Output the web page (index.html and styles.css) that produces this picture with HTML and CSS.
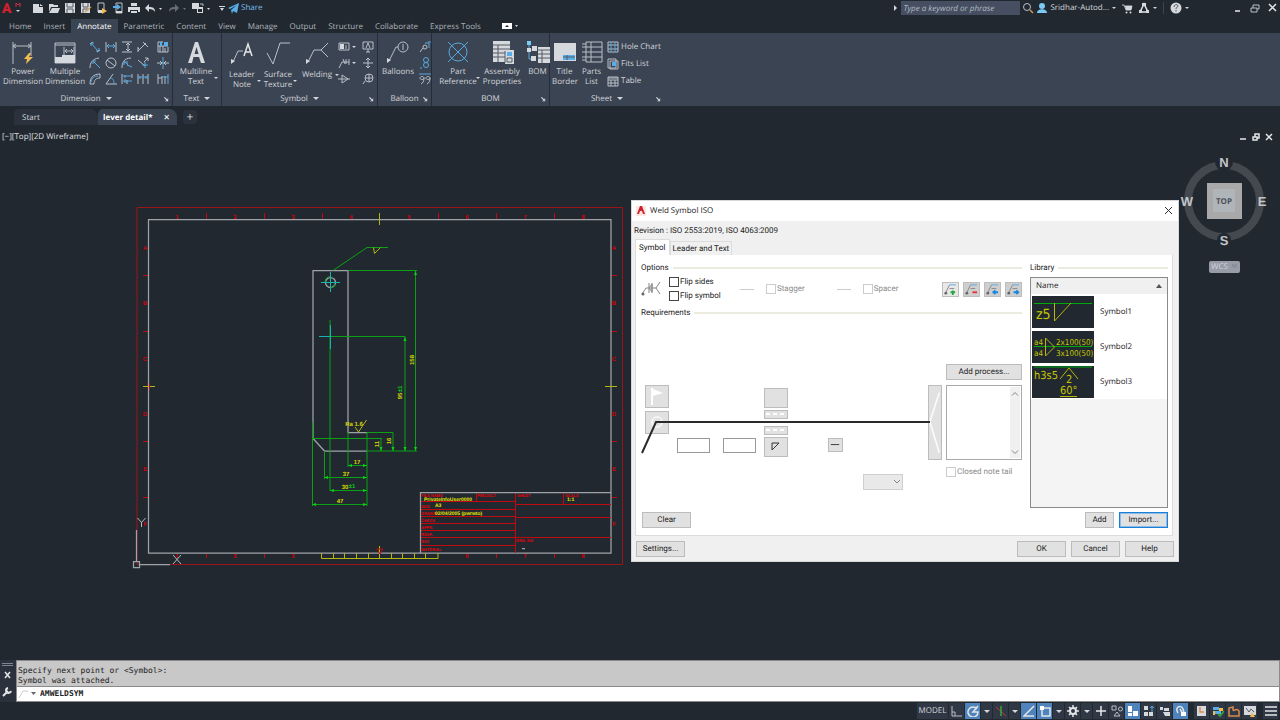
FILE: index.html
```
<!DOCTYPE html>
<html lang="en">
<head>
	<meta charset="utf-8">
	<title>lever detail</title>
	<link rel="stylesheet" href="styles.css">
</head>
<body>

	<!-- title bar -->
	<header class="titlebar">
		<svg class="logo" width="24" height="16" viewBox="0 0 24 16"><path class="red" d="M2 13L6 3h2l4 10H9L7 6 5 13zM4.500 9h5v2h-5z"/><path class="line-red" d="M16 7V3l2 2 2-2v4"/><path class="solid" d="M16 10h4l-2 2z"/></svg>
		<div class="quick">
			<button aria-label="New"><svg width="12" height="12" viewBox="0 0 12 12"><path class="solid" d="M1 2h6v3h4v6H1zM8 2l3 2H8z"/></svg></button>
			<button aria-label="Open"><svg width="12" height="12" viewBox="0 0 12 12"><path class="solid" d="M1 2h4l1 1h4v2H3l-2 5zM4 6h8l-2 5H1z"/></svg></button>
			<button aria-label="Save"><svg width="12" height="12" viewBox="0 0 12 12"><path class="solid" d="M1 1h10v10H1z"/><path class="line-hole" d="M3 1v4h6V1M3 11V7h6v4"/></svg></button>
			<button aria-label="Save As"><svg width="12" height="12" viewBox="0 0 12 12"><path class="solid" d="M1 1h9v10H1z"/><path class="line-hole" d="M3 1v4h5V1M3 11V7h5"/><path class="line-gold" d="M5 10l6-5"/></svg></button>
			<button aria-label="Open from mobile"><svg width="12" height="12" viewBox="0 0 12 12"><path class="line" d="M2 1h6v9H2z"/><path class="solid" d="M2 8h6v3H2z"/><path class="gold" d="M6 6l5 3-5 3z"/></svg></button>
			<button aria-label="Save to mobile"><svg width="12" height="12" viewBox="0 0 12 12"><path class="line" d="M4 1h6v10H4z"/><path class="solid" d="M4 9h6v2H4z"/><path class="blue" d="M1 4h4V2l4 3-4 3V6H1z"/></svg></button>
			<button aria-label="Plot"><svg width="12" height="12" viewBox="0 0 12 12"><path class="solid" d="M3 1h6v3H3zM0 5h12v5h-2V8H2v2H0zM3 9h6v2H3z"/></svg></button>
			<button class="wide" aria-label="Undo"><svg width="18" height="12" viewBox="0 0 18 12"><path class="solid" d="M1 6l4-4v3c4 0 6 1 6 5-1-2-3-3-6-3v3z"/><path class="solid" d="M15 6h3l-1.500 2z"/></svg></button>
			<button class="wide dim" aria-label="Redo"><svg width="18" height="12" viewBox="0 0 18 12"><path class="solid" d="M11 6L7 2v3C3 5 1 6 1 10c1-2 3-3 6-3v3z"/><path class="solid" d="M15 6h3l-1.500 2z"/></svg></button>
			<button class="wide" aria-label="Workspace"><svg width="18" height="12" viewBox="0 0 18 12"><path class="solid" d="M0 1h7v6H0zM5 5h6v6H5z"/><path class="hole" d="M6 7h4v3H6z"/><path class="line" d="M8 2h3v2"/><path class="solid" d="M15 6h3l-1.500 2z"/></svg></button>
			<button aria-label="Customize"><svg width="12" height="12" viewBox="0 0 12 12"><path class="solid" d="M3 4h6v1H3zM4 6h4L6 9z"/></svg></button>
		</div>
		<a class="share" href="#"><svg width="11" height="11" viewBox="0 0 11 11"><path class="blue" d="M0 5l11-5-2 10-4-2-1 3-1-4 6-5-7 4z"/></svg>Share</a>
		<div class="account">
			<svg width="4" height="8" viewBox="0 0 4 8"><path class="solid" d="M0 1l3 3-3 3z"/></svg>
			<input class="search" type="text" aria-label="Search" placeholder="Type a keyword or phrase">
			<button aria-label="Search"><svg width="12" height="12" viewBox="0 0 12 12"><circle class="line" cx="5" cy="5" r="3.500"/><path class="line-gold" d="M8 8l3 3"/></svg></button>
			<button class="user"><svg width="12" height="12" viewBox="0 0 12 12"><circle class="sky" cx="6" cy="4" r="3"/><path class="sky" d="M1 11c0-5 10-5 10 0z"/></svg>Sridhar-Autod...<i class="arrow"></i></button>
			<button aria-label="App store"><svg width="11" height="11" viewBox="0 0 11 11"><path class="line" d="M0 2h2l2 5h5l1-4H3"/><path class="solid" d="M3 3h7l-1 4H4z"/><circle class="solid" cx="4.500" cy="9.500" r="1"/><circle class="solid" cx="8.500" cy="9.500" r="1"/></svg></button>
			<button class="apps" aria-label="Autodesk apps"><svg width="12" height="12" viewBox="0 0 12 12"><path class="line-bold" d="M6 2L2 10h8z"/><path class="solid" d="M4 1h4v3H4zM1 8h3v3H1zM8 8h3v3H8z"/></svg><i class="arrow"></i></button>
			<button class="help" aria-label="Help"><svg width="12" height="12" viewBox="0 0 12 12"><circle class="solid" cx="6" cy="6" r="5.500"/><path class="line-hole" d="M4 5c0-3 4-3 4-1 0 1-2 1-2 3M6 8v1.500"/></svg><i class="arrow"></i></button>
			<button class="win first" aria-label="Minimize"><svg width="10" height="10" viewBox="0 0 10 10"><path class="line-bold" d="M2 8h5"/></svg></button>
			<button class="win" aria-label="Restore"><svg width="10" height="10" viewBox="0 0 10 10"><path class="line" d="M1 5h6v4H1zM3 5V2h6v4H7"/></svg></button>
			<button class="win" aria-label="Close"><svg width="10" height="10" viewBox="0 0 10 10"><path class="line-bold" d="M2 1l7 7M9 1L2 8"/></svg></button>
		</div>
	</header>

	<!-- ribbon tabs -->
	<nav class="tabs">
		<a href="#">Home</a>
		<a href="#">Insert</a>
		<a href="#" class="active">Annotate</a>
		<a href="#">Parametric</a>
		<a href="#">Content</a>
		<a href="#">View</a>
		<a href="#">Manage</a>
		<a href="#">Output</a>
		<a href="#">Structure</a>
		<a href="#">Collaborate</a>
		<a href="#">Express Tools</a>
		<button class="toggle" aria-label="Minimize ribbon"><svg width="18" height="8" viewBox="0 0 18 8"><path class="white" d="M1 1h10v6H1z"/><path class="hole" d="M4 5h4L6 3z"/><path class="solid" d="M14 3h3l-1.500 2z"/></svg></button>
	</nav>

	<!-- ribbon -->
	<section class="ribbon">
		<div class="panel p-dimension">
			<div class="tools">
				<button class="tool w42"><svg width="24" height="24" viewBox="0 0 24 24"><path class="line" d="M2 1v22M20 1v14M2 5h18M5 3L2 5l3 2M17 3l3 2-3 2"/><path class="gold" d="M18 12l-5 6h3l-1 5 7-7h-4l2-4z"/></svg>Power<br>Dimension</button>
				<button class="tool w42"><svg width="24" height="24" viewBox="0 0 24 24"><path class="line" d="M2 2h20v20H2zM2 4h20M11 6v8M21 6v8M12 10h8M14 8l-2 2 2 2M18 8l2 2-2 2"/><path class="light" d="M2 16h7v-2h13v8H2z"/></svg>Multiple<br>Dimension</button>
				<div class="grid five">
					<button aria-label="Aligned"><svg viewBox="0 0 12 12"><path class="line" d="M1 3l3-2M8 11l3-2"/><path class="line-blue" d="M2 2l7 8M2 5V2h3M10 7v3H7"/></svg></button>
					<button aria-label="Horizontal"><svg viewBox="0 0 12 12"><path class="line" d="M1 1v10M11 1v10"/><path class="line-blue" d="M2 5h8M4 3L2 5l2 2M8 3l2 2-2 2"/></svg></button>
					<button aria-label="Vertical"><svg viewBox="0 0 12 12"><path class="line" d="M1 1h10M1 11h10M7 2v8M5 4l2-2 2 2M5 8l2 2 2-2"/></svg></button>
					<button aria-label="Angular"><svg viewBox="0 0 12 12"><path class="line" d="M1 10l8-8M1 6v5M6 1l5 5M3 9l-2-2"/></svg></button>
					<button aria-label="Arrange"><svg viewBox="0 0 12 12"><path class="line" d="M1 1h5M1 1v10h10V6M3 5v6M6 5v6M1 5h10M8 7v4"/><path class="blue" d="M7 1h4v4H7zM3 1h2v4H3z"/></svg></button>
					<button aria-label="Radius"><svg viewBox="0 0 12 12"><path class="line" d="M10 1C3 2 1 6 1 11"/><path class="line-blue" d="M4 4l7 7M4 7V4h3"/></svg></button>
					<button aria-label="Diameter"><svg viewBox="0 0 12 12"><circle class="line" cx="6" cy="6" r="5"/><path class="line" d="M2 3l8 6"/></svg></button>
					<button aria-label="Jogged"><svg viewBox="0 0 12 12"><path class="line" d="M10 1C3 1 1 6 1 11"/><path class="line-blue" d="M3 5l4 2-1 1 5 2M3 8V5h4"/></svg></button>
					<button aria-label="Chamfer"><svg viewBox="0 0 12 12"><path class="line" d="M11 1L7 5M8 1h3v3M1 3l7 6"/><path class="line-blue" d="M8 5v6M5 8h6"/></svg></button>
					<button aria-label="Break"><svg viewBox="0 0 12 12"><path class="line-blue" d="M6 0v12M4 6h4"/><path class="line" d="M0 6h5M12 6H7M3 4l2 2-2 2M9 4L7 6l2 2"/></svg></button>
					<button aria-label="Arc length"><svg viewBox="0 0 12 12"><path class="line" d="M1 11h4c0-4 2-6 6-6V1C4 1 1 5 1 11"/><path class="line-blue" d="M2 9c1-4 3-6 7-6"/></svg></button>
					<button aria-label="Angle"><svg viewBox="0 0 12 12"><path class="line" d="M8 1L1 11h11"/><path class="line-blue" d="M5 5c3 0 4 2 4 6"/></svg></button>
					<button aria-label="Baseline"><svg viewBox="0 0 12 12"><path class="line" d="M1 1v10M6 7v4M11 1v4"/><path class="line-blue" d="M2 3h8M2 8h9M4 6v4M4 2v3"/></svg></button>
					<button aria-label="Chain"><svg viewBox="0 0 12 12"><path class="line" d="M1 1v10M6 1v10M11 1v10"/><path class="line-blue" d="M1 4h10M3 3v3M9 3v3"/></svg></button>
					<button aria-label="Join"><svg viewBox="0 0 12 12"><path class="line" d="M1 1v10M5 3v8M1 5h4M8 3v8"/><path class="line-blue" d="M5 4h6M11 1v10"/></svg></button>
				</div>
			</div>
			<div class="caption">Dimension<i class="arrow"></i><svg class="launch" viewBox="0 0 6 6"><path class="solid" d="M1 5h4V1L4 3 1 0 0 1l3 3z"/></svg></div>
		</div>
		<div class="panel p-text">
			<div class="tools">
				<button class="tool w42"><svg width="24" height="24" viewBox="0 0 24 24"><path class="light" fill-rule="evenodd" d="M4 22L11 1h3l7 21h-4l-2-6H9.500L8 22zM10.500 13h4L12.500 6z"/></svg>Multiline<br>Text<i class="arrow"></i></button>
			</div>
			<div class="caption">Text<i class="arrow"></i></div>
		</div>
		<div class="panel p-symbol">
			<div class="tools">
				<button class="tool low w36"><svg width="24" height="24" viewBox="0 0 24 24"><path class="line" d="M3 21L8 10h5"/><path class="solid" d="M1 23v-5l4 2z"/><path class="line-bold" d="M14 15l4-12 4 12M15 11h6"/></svg>Leader<br>Note<i class="arrow"></i></button>
				<button class="tool low w36"><svg width="24" height="24" viewBox="0 0 24 24"><path class="line" d="M1 12l6 11L14 2h10"/></svg>Surface<br>Texture<i class="arrow"></i></button>
				<button class="tool low single w42"><svg width="24" height="24" viewBox="0 0 24 24"><path class="line" d="M3 21L9 9h7M23 2l-7 7 7 7"/><path class="solid" d="M1 23v-5l4 2z"/></svg>Welding<i class="arrow"></i></button>
				<div class="grid symbols">
					<button aria-label="Tolerance"><svg viewBox="0 0 12 12"><path class="line" d="M1 2h10v7H1z"/><path class="solid" d="M2 3h4v5H2z"/><path class="line" d="M8 4v4"/></svg><i class="arrow"></i></button>
					<button aria-label="Datum"><svg viewBox="0 0 12 12"><path class="line" d="M1 1h10v7H1zM6 8v3M4 11h4M4 7l2-5 2 5"/></svg></button>
					<button aria-label="Feature"><svg viewBox="0 0 12 12"><path class="line" d="M1 11l3-6h7M5 2l2 5M8 2v5M11 2v6"/></svg><i class="arrow"></i></button>
					<button aria-label="Target"><svg viewBox="0 0 12 12"><path class="line" d="M6 1v10M1 6h10M4 3l2-2 2 2M4 9l2 2 2-2"/></svg></button>
					<button aria-label="Taper"><svg viewBox="0 0 12 12"><path class="line" d="M0 6h12M4 2v8l6-4z"/></svg></button>
					<button aria-label="Edge"><svg viewBox="0 0 12 12"><circle class="line" cx="7" cy="5" r="4"/><path class="line" d="M3 5h8M7 1v8M3 8l-2 3"/></svg></button>
				</div>
			</div>
			<div class="caption">Symbol<i class="arrow"></i><svg class="launch" viewBox="0 0 6 6"><path class="solid" d="M1 5h4V1L4 3 1 0 0 1l3 3z"/></svg></div>
		</div>
		<div class="panel p-balloon">
			<div class="tools">
				<button class="tool w36"><svg width="24" height="24" viewBox="0 0 24 24"><circle class="line" cx="17" cy="6" r="5"/><path class="line" d="M3 20L10 6h2M17 3v6"/><path class="solid" d="M1 22v-5l4 2z"/></svg>Balloons</button>
				<div class="grid one">
					<button aria-label="Collect"><svg viewBox="0 0 12 12"><circle class="line" cx="6" cy="6" r="2"/><path class="line" d="M1 11l3-4"/><path class="line-blue" d="M6 2h4v5M9 1h3"/></svg></button>
					<button aria-label="Renumber"><svg viewBox="0 0 12 12"><circle class="line-blue" cx="7" cy="3" r="2.500"/><circle class="line-blue" cx="7" cy="8" r="2.500"/><path class="line-blue" d="M1 11h2"/></svg></button>
					<button aria-label="Align"><svg viewBox="0 0 12 12"><path class="line-blue" d="M0 1h12"/><path class="line" d="M5 5c0 2-4 2-4 0s4-2 4 0c0 3-1 5-3 6M11 5c0 2-4 2-4 0s4-2 4 0c0 3-1 5-3 6"/></svg></button>
				</div>
			</div>
			<div class="caption">Balloon<svg class="launch" viewBox="0 0 6 6"><path class="solid" d="M1 5h4V1L4 3 1 0 0 1l3 3z"/></svg></div>
		</div>
		<div class="panel p-bom">
			<div class="tools">
				<button class="tool w42"><svg width="24" height="24" viewBox="0 0 24 24"><circle class="line-blue" cx="12" cy="11" r="9"/><path class="line-blue" d="M2 1l20 20M22 1L2 21"/></svg>Part<br>Reference<i class="arrow"></i></button>
				<button class="tool w42"><svg width="24" height="24" viewBox="0 0 24 24"><path class="light" d="M3 0h17v21H3z"/><path class="line-hole" d="M3 4h17M3 8h17M3 12h17M3 16h17M8 4v17"/><path class="light" d="M15 9h9v14h-9z"/><path class="blue" d="M17 11h5v4h-5z"/><path class="line-hole" d="M15 10v12M17 17h5v4h-5z"/></svg>Assembly<br>Properties</button>
				<button class="tool w24"><svg width="24" height="24" viewBox="0 0 24 24"><path class="sky" d="M1 0h4v4H1z"/><path class="line-blue" d="M3 4v5h4M3 9v9h3"/><path class="light" d="M6 5h5v5H6zM1 7h4v4H1zM5 15h5v5H5zM12 6h12v16H12z"/><path class="line-hole" d="M12 9h12M12 13h12M12 17h12M16 9v13"/></svg>BOM</button>
			</div>
			<div class="caption">BOM<svg class="launch" viewBox="0 0 6 6"><path class="solid" d="M1 5h4V1L4 3 1 0 0 1l3 3z"/></svg></div>
		</div>
		<div class="panel p-sheet">
			<div class="tools">
				<button class="tool w24"><svg width="24" height="24" viewBox="0 0 24 24"><path class="light" d="M1 2h22v18H1z"/><path class="blue" d="M10 14h12v5H10z"/><path class="line-hole" d="M14 14v5M10 16h12"/></svg>Title<br>Border</button>
				<button class="tool w24"><svg width="24" height="24" viewBox="0 0 24 24"><path class="line" d="M6 1h16v20H6zM2 6h20M2 11h20M2 16h20M11 1v20M2 3h4M2 19h4"/></svg>Parts<br>List</button>
				<div class="list">
					<button><svg viewBox="0 0 12 12"><path class="line" d="M1 1h10v10H1zM1 4h10M1 8h10"/><path class="line-blue" d="M4 1v10M8 1v10"/></svg>Hole Chart</button>
					<button><svg viewBox="0 0 12 12"><path class="line" d="M1 1h8v9H1zM3 3h8v8H3z"/><path class="blue" d="M5 4h4v4H5z"/></svg>Fits List</button>
					<button><svg viewBox="0 0 12 12"><path class="line" d="M1 2h10v9H1zM1 5h10M1 8h10M4 5v6M8 5v6M1 3h10"/></svg>Table</button>
				</div>
			</div>
			<div class="caption">Sheet<i class="arrow"></i><svg class="launch" viewBox="0 0 6 6"><path class="solid" d="M1 5h4V1L4 3 1 0 0 1l3 3z"/></svg></div>
		</div>
	</section>

	<!-- open files -->
	<nav class="files">
		<a href="#" class="file">Start</a>
		<a href="#" class="file current">lever detail*<span>✕</span></a>
		<button class="add-file" aria-label="New tab">+</button>
	</nav>

	<!-- drawing area -->
	<main class="viewport">
		<div class="view-label">[−][Top][2D Wireframe]</div>
		<div class="view-win">
			<svg viewBox="0 0 8 8"><path class="line-bold" d="M1 6h6"/></svg>
			<svg viewBox="0 0 8 8"><path class="line-bold" d="M1 4h4v3H1zM3 4V1h4v4H5"/></svg>
			<svg viewBox="0 0 8 8"><path class="line-bold" d="M1 1l6 6M7 1L1 7"/></svg>
		</div>

		<svg class="sheet" width="500" height="380" viewBox="130 195 500 380">
			<!-- frame -->
			<path class="s-red" d="M137 207.500H622.500V564.500H137z"/>
			<path class="s-tick" d="M206.500 213v6M264.500 213v6M322.500 213v6M438.500 213v6M496.500 213v6M554.500 213v6M206.500 553v5M264.500 553v5M496.500 553v5M554.500 553v5M143 275.500h6M143 331.500h6M143 441.500h6M143 497.500h6M611 275.500h6M611 331.500h6M611 441.500h6M611 497.500h6"/>
			<path class="s-white" d="M148.500 219.500H611V553H148.500z"/>
			<g class="t-red">
				<text x="177" y="219">1</text><text x="235" y="219">2</text><text x="293" y="219">3</text><text x="351" y="219">4</text><text x="409" y="219">5</text><text x="467" y="219">6</text><text x="525" y="219">7</text><text x="583" y="219">8</text>
				<text x="177" y="558">1</text><text x="235" y="558">2</text><text x="293" y="558">3</text><text x="467" y="558">6</text><text x="525" y="558">7</text><text x="583" y="558">8</text>
				<text x="145" y="250">A</text><text x="145" y="305">B</text><text x="145" y="361">C</text><text x="145" y="416">D</text><text x="145" y="471">E</text><text x="145" y="526">F</text>
				<text x="614" y="250">A</text><text x="614" y="305">B</text><text x="614" y="361">C</text><text x="614" y="416">D</text><text x="614" y="471">E</text><text x="614" y="526">F</text>
			</g>
			<path class="s-yellow" d="M379.500 213v12M143 386.500h12M605 386.500h12M379.500 546v12M321.500 553v5.500H438V553M333.500 553v5M344.500 553v5M356.500 553v5M368.500 553v5M391.500 553v5M402.500 553v5M414.500 553v5M425.500 553v5"/>
			<path class="s-tick" d="M149.500 383v7M377 549h6l-3 5z"/>

			<!-- lever -->
			<path class="s-white" d="M367 432.500H348V270.500H313V438.500L324.500 451H367"/>
			<circle class="s-white" cx="330.500" cy="282.500" r="5"/>
			<path class="s-green" d="M325 282a6 6 0 0 1 5-5.500M335.500 284a6 6 0 0 1-5 4M333 270.500L367 247.500H388M348 270.500H417M415.500 270V451M330 320V491M330 336.500H405V451M367 451H417M367 432.500H393V451M313 438.500H382M381 438V451M348 432V467M367 432V506M324.500 451V479M312.500 422V506M348 465.500H367M324 477.500H367M330 490.500H367M312 504.500H367"/>
			<path class="s-cyan" d="M321 282.500h19M330.500 272v20M319 336.500h11M330.500 325v24"/>
			<path class="f-green" d="M414 275l1.500-4 1.500 4zM414 447l1.500 4 1.500-4zM403.500 341l1.500-4 1.500 4zM403.500 447l1.500 4 1.500-4zM379.500 447l1.500 4 1.500-4zM391.500 447l1.500 4 1.500-4zM352 464l-4 1.500 4 1.500zM363 464l4 1.500-4 1.500zM328 476l-4 1.500 4 1.500zM363 476l4 1.500-4 1.500zM334 489l-4 1.500 4 1.500zM363 489l4 1.500-4 1.500zM316 503l-4 1.500 4 1.500zM363 503l4 1.500-4 1.500z"/>
			<path class="s-yellow" d="M373.500 247.500l1 6 6-6M355 427l3.500 5L366.500 420"/>
			<g class="t-yellow">
				<text x="357" y="464">17</text><text x="346" y="476">37</text><text x="345" y="489">30</text><text x="340" y="503">47</text><text x="354" y="426">Ra 1.6</text>
				<text transform="translate(414 360) rotate(-90)">158</text>
				<text transform="translate(402 396) rotate(-90)">95</text>
				<text transform="translate(379 444) rotate(-90)">11</text>
				<text transform="translate(391 441) rotate(-90)">16</text>
			</g>
			<g class="t-green"><text x="352" y="488">±1</text><text transform="translate(402 389) rotate(-90)">±1</text></g>

			<!-- title block -->
			<path class="s-tick" d="M420 501.500h95M420 509.500h95M420 516.500h95M420 523.500h95M420 530.500h95M420 537.500h95M420 545.500h95M515.500 492v61M476.500 492v9M563.500 492v12M515 504.500h96M515 517.500h96M515 537.500h96"/>
			<path class="s-white" d="M420.500 553V492.500H611M522 548.500h3"/>
			<g class="t-block">
				<text x="421" y="497">FILE NAME</text><text x="477" y="497">PROJECT</text><text x="517" y="497">SHEET</text><text x="565" y="497">SCALE</text>
				<text x="421" y="508">SIZE</text><text x="421" y="515">DRAWN</text><text x="421" y="522">CHECK</text><text x="421" y="529">APPR.</text><text x="421" y="536">RESP.</text><text x="421" y="543">REV</text><text x="421" y="551">MATERIAL</text><text x="516" y="542">DRG. NO</text>
			</g>
			<g class="t-value">
				<text x="424" y="501">PrivateInfoUser0000</text><text x="435" y="507">A3</text><text x="435" y="515">02/04/2005 (pwrwto)</text><text x="567" y="501">1:1</text>
			</g>

			<!-- ucs icon -->
			<path class="s-white" d="M133.500 561.500h6v6h-6zM136.500 561V530M140 564.500H170"/>
			<path class="s-light" d="M137.500 518l4 4.500 4-4.500M141.500 522v5M173 555l8 9M181 555l-8 9"/>
		</svg>

		<!-- view cube -->
		<svg class="cube" width="96" height="128" viewBox="0 0 96 128">
			<circle class="ring" cx="44" cy="51" r="36"/>
			<circle class="mask" cx="44" cy="12" r="9"/><circle class="mask" cx="44" cy="90" r="7"/>
			<path class="cube-side" d="M27 33h35v36H27z"/><path class="cube-top" d="M33 39h22v23H33z"/>
			<text class="cube-text" x="44" y="54">TOP</text>
			<text class="compass" x="44" y="17">N</text><text class="compass" x="44" y="95">S</text><text class="compass" x="7" y="56">W</text><text class="compass" x="82" y="56">E</text>
			<rect class="wcs" x="29" y="111" width="31" height="12" rx="2"/><text class="wcs-text" x="31" y="119">WCS</text><path class="line-dim" d="M52 115h5l-2.500 3z"/>
		</svg>

		<!-- weld symbol dialog -->
		<div class="dialog" role="dialog" aria-label="Weld Symbol ISO">
			<div class="dialog-title"><svg width="10" height="12" viewBox="0 0 10 12"><path class="tint" d="M0 1h10v10H0z"/><path class="red" fill-rule="evenodd" d="M1 9L4 1h2l3 8H7L6 6H4L3 9z"/></svg>Weld Symbol ISO<button aria-label="Close"><svg width="10" height="10" viewBox="0 0 10 10"><path class="ink" d="M1 1l7 7M8 1L1 8"/></svg></button></div>
			<p class="revision">Revision : ISO 2553:2019, ISO 4063:2009</p>
			<div class="dialog-tabs"><button class="on">Symbol</button><button>Leader and Text</button></div>
			<div class="page">
				<div class="left">
					<h3>Options</h3>
					<div class="options">
						<svg width="20" height="16" viewBox="0 0 20 16"><path class="grey" d="M1 13l4-6h10M19 1l-4 6 4 6M8 2v10M8 7l3-4v8zM11 2v10"/><circle class="greyfill" cx="2" cy="13" r="1.500"/></svg>
						<div class="flips">
							<label><input type="checkbox">Flip sides</label>
							<label><input type="checkbox">Flip symbol</label>
						</div>
						<hr>
						<label class="off"><input type="checkbox" disabled>Stagger</label>
						<hr>
						<label class="off"><input type="checkbox" disabled>Spacer</label>
						<div class="actions">
							<button class="lit" aria-label="Add leader"><svg viewBox="0 0 16 14"><path class="grey" d="M2 12L7 2M7 6h5"/><path class="line-blue" d="M7 2h7"/><circle class="greyfill" cx="3" cy="11" r="1.500"/><path class="plus" d="M8 10h5M10.500 8v5"/></svg></button>
							<button aria-label="Remove leader"><svg viewBox="0 0 16 14"><path class="grey" d="M2 12L7 2M7 6h5"/><path class="line-blue" d="M7 2h7"/><circle class="greyfill" cx="3" cy="11" r="1.500"/><path class="minus" d="M9 10h5"/></svg></button>
							<button aria-label="Previous leader"><svg viewBox="0 0 16 14"><path class="grey" d="M2 12L7 2M7 6h5"/><path class="line-blue" d="M7 2h7"/><circle class="greyfill" cx="3" cy="11" r="1.500"/><path class="go" d="M14 10H8M11 8l-2 2 2 2"/></svg></button>
							<button aria-label="Next leader"><svg viewBox="0 0 16 14"><path class="grey" d="M2 12L7 2M7 6h5"/><path class="line-blue" d="M7 2h7"/><circle class="greyfill" cx="3" cy="11" r="1.500"/><path class="go" d="M8 10h6M11 8l2 2-2 2"/></svg></button>
						</div>
					</div>
					<h3>Requirements</h3>
					<div class="weld">
						<svg class="refline" width="290" height="36" viewBox="0 0 290 36"><path d="M1 33L15 2H289"/></svg>
						<div class="flags">
							<button aria-label="Field weld"><svg viewBox="0 0 22 22"><path class="white" d="M5 2h2v1l10 4-10 3v9H5z"/></svg></button>
							<button aria-label="All around"><svg viewBox="0 0 22 22"><circle class="faint" cx="11" cy="10" r="5"/></svg></button>
						</div>
						<div class="fields"><input type="text" aria-label="Size"><input type="text" aria-label="Length"></div>
						<div class="stack">
							<button aria-label="Arrow side symbol"></button>
							<button class="dash" aria-label="Upper dashed line"><svg viewBox="0 0 22 8"><path class="dashes" d="M1 3h18"/></svg></button>
							<button class="dash lower" aria-label="Lower dashed line"><svg viewBox="0 0 22 8"><path class="dashes" d="M1 3h18"/></svg></button>
							<button aria-label="Other side symbol"><svg viewBox="0 0 22 18"><path class="ink" d="M7 5h7L7 12z"/></svg></button>
						</div>
						<div class="contour"><button aria-label="Contour"><svg viewBox="0 0 14 12"><path class="ink" d="M2 6h9"/></svg></button></div>
						<div class="method"><select aria-label="Method" disabled><option></option></select><svg width="8" height="6" viewBox="0 0 8 6"><path class="grey" d="M1 1l3 3 3-3"/></svg></div>
						<div class="tail"><button aria-label="Tail"><svg viewBox="0 0 14 74"><path class="tail-line" d="M12 2L1 36l11 36"/></svg></button></div>
						<div class="note">
							<button>Add process...</button>
							<textarea aria-label="Note" rows="4"></textarea>
							<svg class="scroll" viewBox="0 0 10 70"><path class="grey" d="M2 8l3-3 3 3M2 63l3 3 3-3"/></svg>
							<label class="off"><input type="checkbox" disabled>Closed note tail</label>
						</div>
					</div>
					<button class="btn clear">Clear</button>
				</div>
				<div class="library">
					<h3>Library</h3>
					<div class="box">
						<table>
							<thead><tr><th colspan="2">Name<i></i></th></tr></thead>
							<tbody>
								<tr><td class="thumb"><svg width="62" height="32" viewBox="0 0 62 32"><path class="t-line" d="M2 7.500h58"/><path class="t-sym" d="M22.500 7v18L39 7"/><text class="big" x="4" y="23">z5</text></svg></td><td>Symbol1</td></tr>
								<tr><td class="thumb"><svg width="62" height="32" viewBox="0 0 62 32"><path class="t-line" d="M2 15.500h58"/><path class="t-sym" d="M13.500 7v18l9-9z"/><text x="2" y="14">a4</text><text x="2" y="25">a4</text><text x="24" y="14">2x100(50)</text><text x="24" y="25">3x100(50)</text></svg></td><td>Symbol2</td></tr>
								<tr><td class="thumb"><svg width="62" height="32" viewBox="0 0 62 32"><path class="t-line" d="M2 1h58"/><path class="t-sym" d="M28 13l9-11 9 11M28 30.500h17"/><text class="mid" x="2" y="13">h3s5</text><text class="mid" x="34" y="17">2</text><text class="mid" x="28" y="28">60°</text></svg></td><td>Symbol3</td></tr>
							</tbody>
						</table>
					</div>
					<div class="row"><button class="btn small">Add</button><button class="btn focus">Import...</button></div>
				</div>
			</div>
			<div class="dialog-foot">
				<button class="btn">Settings...</button>
				<button class="btn ok">OK</button>
				<button class="btn">Cancel</button>
				<button class="btn">Help</button>
			</div>
		</div>
	</main>

	<!-- command line -->
	<section class="command">
		<div class="grip"><svg width="14" height="42" viewBox="0 0 14 42"><path class="line-dim" d="M2 3.500h11M2 5.500h11"/><path class="line-bold" d="M5 12l5 6M10 12l-5 6"/><path class="line-fat" d="M3 36l5-5M8 28a2.500 2.500 0 1 0 3 3"/></svg></div>
		<div class="console">
			<pre>Specify next point or &lt;Symbol&gt;:
Symbol was attached.</pre>
			<div class="prompt"><svg width="20" height="12" viewBox="0 0 20 12"><path class="faint-ink" d="M2 10l4-7h5"/><path class="greyfill" d="M14 4h5l-2.500 3z"/></svg><input type="text" aria-label="Command" value="AMWELDSYM"></div>
		</div>
	</section>

	<!-- status bar -->
	<footer class="status">
		<button class="model">MODEL</button>
		<button aria-label="Ortho"><svg viewBox="0 0 12 12"><path class="line" d="M1 1v10h10M1 7h3v4"/></svg></button>
		<button class="on" aria-label="Polar"><svg viewBox="0 0 12 12"><path class="line-bold" d="M10 4a5 5 0 1 0 1 3H6l5-6"/></svg></button>
		<button class="drop" aria-label="Polar settings"><i class="arrow"></i></button>
		<button aria-label="Isometric"><svg viewBox="0 0 12 12"><path class="line-red" d="M1 2l10 9"/><path class="line-green" d="M6 1v10"/></svg></button>
		<button class="drop" aria-label="Isometric settings"><i class="arrow"></i></button>
		<button class="on" aria-label="Object tracking"><svg viewBox="0 0 12 12"><path class="line-bold" d="M11 1L1 11h10"/></svg></button>
		<button class="on" aria-label="Object snap"><svg viewBox="0 0 12 12"><path class="line-bold" d="M3 3h8v8H3z"/><path class="white" d="M1 1h4v4H1z"/></svg></button>
		<button class="drop" aria-label="Snap settings"><i class="arrow"></i></button>
		<button aria-label="Workspace"><svg viewBox="0 0 12 12"><circle class="line-fat" cx="6" cy="6" r="3"/><path class="line-bold" d="M6 0v3M6 9v3M0 6h3M9 6h3M2 2l2 2M8 8l2 2M10 2L8 4M4 8l-2 2"/></svg></button>
		<button class="drop" aria-label="Workspace settings"><i class="arrow"></i></button>
		<button aria-label="Annotation monitor"><svg viewBox="0 0 12 12"><path class="line-bold" d="M6 1v10M1 6h10"/></svg></button>
		<button aria-label="Units"><svg viewBox="0 0 12 12"><path class="line" d="M1 1h4v4H1zM6 7l3 4H3z"/><circle class="line" cx="9.500" cy="4" r="2"/></svg></button>
		<button class="on" aria-label="Power snap"><svg viewBox="0 0 12 12"><path class="white" d="M1 1h4v6H1zM6 6h5v5H6zM1 8h4v3H1z"/></svg></button>
		<button aria-label="Structure"><svg viewBox="0 0 12 12"><path class="solid" d="M1 1h4v4H1zM1 7h4v4H1zM6 7h4v4H6z"/><path class="line-blue" d="M9 7V1M7 3l2-2 2 2"/></svg></button>
		<button aria-label="Hide situation"><svg viewBox="0 0 12 12"><path class="solid" d="M1 2h3v3H1zM5 3h5v3H5zM4 7h7v4H6z"/></svg></button>
		<button class="on" aria-label="Associative hide"><svg viewBox="0 0 12 12"><path class="line-bold" d="M3 8C-1 2 6-1 8 4l1 3M5 4l3 5"/><path class="white" d="M6 7h5v4H6z"/></svg></button>
		<button class="gap" aria-label="Standards"><svg viewBox="0 0 12 12"><path class="light" d="M1 1h9v10H1z"/><path class="line-orange" d="M4 2v5h4"/></svg></button>
		<button aria-label="Layers"><svg viewBox="0 0 12 12"><path class="blue" d="M1 2h6v3H1zM3 6h6v3H3z"/><path class="gold" d="M7 3h4v3H7zM1 6h2v4H1z"/><path class="line-green" d="M6 9l2 2 4-5"/></svg></button>
		<button aria-label="Workspaces"><svg viewBox="0 0 12 12"><path class="line-orange" d="M1 3v8h10V6c-3-4-5 1-6-1V2z"/></svg></button>
		<button aria-label="Hardware"><svg viewBox="0 0 12 12"><path class="light" d="M0 1h12v9H0z"/><path class="line-hole" d="M2 3l3 4 2-3 3 3"/><path class="gold" d="M8 7l3 5H6z"/></svg></button>
		<button class="gap" aria-label="Customization"><svg viewBox="0 0 12 12"><path class="line-bold" d="M0 2h12M0 6h12M0 10h12"/></svg></button>
	</footer>
</body>
</html>
```
FILE: styles.css
```
*{
	box-sizing: border-box;
	margin: 0;
	padding: 0;
}

body{
	display: flex;
	flex-direction: column;
	height: 100vh;
	min-height: 600px;
	overflow: hidden;
	background: #212830;
	color: #d3d6da;
	font: 8px/10px "Open Sans", "Noto Sans", sans-serif;
	text-rendering: geometricPrecision;
}

button, input, select, textarea{
	font: inherit;
	color: inherit;
	border: 0;
	border-radius: 0;
	background: none;
	text-rendering: inherit;
}

a{
	color: inherit;
	text-decoration: none;
}

svg{
	display: block;
	flex: none;
	fill: none;
}

/* icon paint */
.solid, .light{ fill: #d5d8dc; }
.white{ fill: #fff; }
.hole{ fill: #212830; }
.red{ fill: #d0202c; }
.tint{ fill: #fbe6e4; }
.gold{ fill: #f0bc50; }
.blue{ fill: #58aee8; }
.sky{ fill: #7cc8f6; }
.greyfill{ fill: #666; }
.line{ stroke: #b9bfc7; }
.line-bold{ stroke: #e4e6e8; stroke-width: 1.5; }
.line-fat{ stroke: #e4e6e8; stroke-width: 2; }
.line-blue{ stroke: #5aa9de; }
.line-gold{ stroke: #cf9c56; stroke-width: 1.5; }
.line-red{ stroke: #cc3240; }
.line-green{ stroke: #38a83c; stroke-width: 1.5; }
.line-orange{ stroke: #d88a4e; stroke-width: 1.5; }
.line-hole{ stroke: #555b64; }
.line-dim{ stroke: #7f858e; }
.ink{ stroke: #333; }
.grey{ stroke: #858585; }
.faint{ stroke: #f4f4f4; stroke-width: 2; }
.faint-ink{ stroke: #ccc; }

.arrow{
	display: inline-block;
	margin-left: 5px;
	border: 3px solid transparent;
	border-top-color: #d3d6da;
	border-bottom: 0;
	vertical-align: middle;
}

/* title bar */
.titlebar{
	display: flex;
	align-items: center;
	flex: none;
	height: 16px;
}

.logo{
	margin-right: 8px;
}

.quick{
	display: flex;
	gap: 4px;
}

.quick .wide{
	margin-right: 2px;
}

.quick .dim{
	opacity: .4;
}

.share{
	display: flex;
	align-items: center;
	gap: 2px;
	color: #79bdec;
}

.account{
	display: flex;
	align-items: center;
	margin-left: auto;
	padding-right: 3px;
}

.search{
	width: 119px;
	height: 14px;
	margin: 0 2px 0 3px;
	padding: 0 2px;
	background: #454f61;
	font-style: italic;
}

.search::placeholder{
	color: #b4bac3;
}

.user{
	display: flex;
	align-items: center;
	gap: 2px;
	margin: 0 6px 0 2px;
}

.user .arrow, .apps .arrow, .help .arrow{
	margin-left: 1px;
	border-width: 2px;
	border-bottom: 0;
}

.apps, .help{
	display: flex;
	align-items: center;
	gap: 2px;
	margin-left: 5px;
}

.help{
	margin-left: 6px;
	padding-left: 6px;
	border-left: 1px solid #3b4453;
}

.win{
	margin-left: 7px;
}

.win.first{
	margin-left: 44px;
}

/* ribbon tabs */
.tabs{
	display: flex;
	flex: none;
	height: 17px;
	padding: 3px 0 0 3px;
	line-height: 15px;
}

.tabs a{
	padding: 0 6px;
	color: #aeb3ba;
}

.tabs .active{
	background: #3b4453;
	color: #fff;
}

.toggle{
	margin-left: 14px;
}

/* ribbon */
.ribbon{
	display: flex;
	flex: none;
	height: 73px;
	background: #3b4453;
}

.panel{
	display: flex;
	flex-direction: column;
	border-right: 1px solid #262d38;
}

.p-dimension{ width: 173px; }
.p-text{ width: 49px; }
.p-symbol{ width: 156px; }
.p-balloon{ width: 54px; }
.p-bom{ width: 118px; }
.p-sheet{ width: 114px; border-right: 0; }

.tools{
	display: flex;
	align-items: flex-start;
	flex: 1;
	padding: 8px 2px 0;
}

.tool{
	position: relative;
	flex: none;
	white-space: nowrap;
}

.tool svg{
	margin: 0 auto 2px;
}

.tool.low svg{
	margin-bottom: 5px;
}

.tool .arrow{
	position: absolute;
	right: -1px;
	bottom: 8px;
	border-width: 2px;
	border-bottom: 0;
}

.tool.single .arrow{
	bottom: 4px;
}

.w42{ width: 42px; }
.w36{ width: 36px; }
.w24{ width: 25px; }

.grid{
	display: grid;
	align-content: start;
	gap: 4px;
	margin-left: 3px;
}

.five{ grid-template-columns: repeat(4, 12px) 16px; }
.symbols{ grid-template-columns: 20px 12px; margin-left: 0; }
.one{ grid-template-columns: 12px; }

.grid svg, .list svg{
	width: 12px;
	height: 12px;
}

.five button:nth-child(5n){
	padding-left: 4px;
}

.symbols button{
	display: flex;
	align-items: center;
}

.symbols .arrow{
	margin-left: 2px;
	border-width: 2px;
	border-bottom: 0;
}

.p-bom .tools, .p-sheet .tools{
	gap: 2px;
}

.p-bom .tools{
	padding-left: 5px;
}

.list{
	display: grid;
	align-content: start;
	gap: 5px;
	margin-left: 1px;
}

.list button{
	display: flex;
	align-items: center;
	gap: 2px;
	height: 12px;
	white-space: nowrap;
}

.caption{
	position: relative;
	height: 15px;
	line-height: 16px;
	text-align: center;
}

.launch{
	position: absolute;
	right: 3px;
	bottom: 4px;
	width: 5px;
	height: 5px;
}

/* open files */
.files{
	display: flex;
	align-items: flex-end;
	flex: none;
	height: 19px;
	padding: 0 14px;
	line-height: 17px;
}

.file{
	width: 84px;
	height: 16px;
	padding-left: 8px;
	border-radius: 5px 8px 0 0;
	background: #2b323e;
}

.current{
	display: flex;
	justify-content: space-between;
	width: 79px;
	padding: 0 7px 0 5px;
	background: #3b4453;
	color: #fff;
	font-weight: bold;
}

.current span{
	font-weight: normal;
}

.add-file{
	width: 14px;
	height: 14px;
	margin: 0 0 1px 6px;
	border-radius: 4px;
	background: #2b323e;
	font-size: 12px;
	line-height: 12px;
}

/* drawing area */
.viewport{
	position: relative;
	flex: 1;
	min-height: 0;
}

.view-label{
	padding: 7px 2px;
	color: #e0e2e4;
}

.view-win{
	position: absolute;
	top: 8px;
	right: 7px;
	display: flex;
	gap: 5px;
}

.view-win svg{
	width: 8px;
	height: 8px;
}

.sheet{
	position: absolute;
	top: 70px;
	left: 130px;
}

.s-red{ stroke: #9c1418; }
.s-tick{ stroke: #c00a10; }
.s-white{ stroke: #9fa3a8; stroke-width: 1.25; }
.s-light{ stroke: #b4b8bc; }
.s-yellow{ stroke: #b6b60c; }
.s-green{ stroke: #0aa214; }
.s-cyan{ stroke: #16b4ae; }
.f-green{ fill: #08d414; }

.sheet text{
	font-family: "Liberation Sans", sans-serif;
	font-size: 6px;
	font-weight: bold;
	text-anchor: middle;
}

.t-red{ fill: #d00008; }
.t-yellow{ fill: #d6d600; }
.t-green{ fill: #08c814; }
.t-block{ fill: #f00008; }
.t-value{ fill: #e6e600; }

.sheet .t-block text{
	font-size: 4px;
	text-anchor: start;
}

.sheet .t-value text{
	font-size: 5px;
	text-anchor: start;
}

.cube{
	position: absolute;
	top: 25px;
	right: 4px;
}

.ring{ stroke: #43494f; stroke-width: 8; }
.mask{ fill: #212830; }
.cube-side{ fill: #a9a9a9; }
.cube-top{ fill: #b0b5b9; }

.cube text{
	text-anchor: middle;
	font-weight: bold;
}

.cube-text{ fill: #4a5058; font-size: 8px; }
.compass{ fill: #c2c4c6; font-size: 13px; font-family: "Liberation Sans", sans-serif; }
.wcs{ fill: #989ba8; }

.cube .wcs-text{
	fill: #d0d2da;
	font-weight: normal;
	text-anchor: start;
}

/* weld symbol dialog */
.dialog{
	position: absolute;
	top: 75px;
	left: 631px;
	display: flex;
	flex-direction: column;
	width: 548px;
	border: 1px solid #d8d8d8;
	background: #f0f0f0;
	color: #222;
	font-family: Roboto, "Open Sans", sans-serif;
}

.dialog-title{
	display: flex;
	align-items: center;
	gap: 4px;
	height: 20px;
	padding: 0 4px;
	background: #fff;
	font-family: "Open Sans", "Noto Sans", sans-serif;
}

.dialog-title button{
	margin-left: auto;
}

.revision{
	padding: 5px 2px 3px;
}

.dialog-tabs{
	display: flex;
	align-items: flex-end;
	height: 16px;
	padding: 0 3px;
}

.dialog-tabs button{
	height: 14px;
	padding: 0 2px;
	border: 1px solid #dcdcdc;
	border-bottom: 0;
}

.dialog-tabs .on{
	height: 16px;
	padding: 0 3px;
	background: #fff;
}

.page{
	display: flex;
	gap: 8px;
	height: 281px;
	margin: 0 5px 0 3px;
	padding: 8px 4px 7px 5px;
	border: 1px solid #dcdcdc;
	border-top: 0;
	background: #fff;
}

.left{
	display: flex;
	flex-direction: column;
	flex: 1;
}

h3{
	display: flex;
	align-items: center;
	gap: 4px;
	font-size: 8px;
	font-weight: normal;
}

h3::after{
	content: "";
	flex: 1;
	height: 2px;
	background: #ebebe0;
}

.options{
	display: flex;
	align-items: center;
	gap: 12px;
	height: 32px;
	margin-bottom: 3px;
}

.flips{
	display: grid;
	gap: 4px;
	width: 50px;
	margin-left: -4px;
	margin-right: 9px;
}

.dialog label{
	display: flex;
	align-items: center;
	gap: 1px;
	white-space: nowrap;
}

.dialog input[type=checkbox]{
	appearance: none;
	width: 10px;
	height: 10px;
	border: 1px solid #444;
	background: #fff;
}

.dialog .off{
	color: #8a8a8a;
}

.dialog .off input{
	border-color: #ccc;
}

.options hr{
	width: 14px;
	border: 0;
	border-top: 1px solid #ccc;
}

.options .off + hr{
	margin-left: 20px;
}

.actions{
	display: flex;
	gap: 4px;
	margin-left: auto;
}

.actions button{
	width: 17px;
	height: 15px;
	border: 1px solid #bdbdbd;
	background: #cecece;
}

.actions .lit{
	background: #e8e8e8;
}

.actions svg{
	width: 15px;
	height: 13px;
}

.plus{ stroke: #26a83c; stroke-width: 2; }
.minus{ stroke: #e8303a; stroke-width: 2; }
.go{ stroke: #1a88e0; stroke-width: 2; }

.weld{
	position: relative;
	display: flex;
	flex: 1;
	align-items: flex-start;
	padding-top: 46px;
}

.refline{
	position: absolute;
	top: 102px;
	left: 0;
	stroke: #2a2a2a;
	stroke-width: 2;
	pointer-events: none;
}

.weld button, .weld select{
	border: 1px solid #bcbcbc;
	background: #e1e1e1;
}

.flags{
	display: grid;
	gap: 3px;
	margin: 21px 8px 0 4px;
}

.flags button{
	width: 24px;
	height: 23px;
}

.fields{
	display: flex;
	gap: 13px;
	margin-top: 74px;
}

.fields input{
	width: 33px;
	height: 15px;
	border: 1px solid #999;
	background: #fff;
}

.stack{
	display: grid;
	gap: 2px;
	margin: 24px 40px 0 8px;
}

.stack button{
	width: 24px;
	height: 20px;
}

.stack .dash{
	height: 9px;
}

.stack .lower{
	margin-top: 5px;
}

.dashes{
	stroke: #fff;
	stroke-width: 2;
	stroke-dasharray: 4 3;
}

.contour{
	margin: 74px 20px 0 0;
}

.contour button{
	width: 15px;
	height: 14px;
}

.method{
	position: relative;
	margin-top: 110px;
}

.method select{
	display: block;
	width: 40px;
	height: 16px;
	appearance: none;
}

.method svg{
	position: absolute;
	top: 5px;
	right: 2px;
	pointer-events: none;
}

.tail{
	margin: 21px 4px 0 auto;
}

.tail button{
	width: 14px;
	height: 75px;
}

.tail-line{
	stroke: #fafafa;
	stroke-width: 2;
}

.note{
	position: relative;
	width: 76px;
}

.note button{
	display: block;
	width: 100%;
	height: 16px;
	margin-bottom: 5px;
}

.note textarea{
	display: block;
	width: 100%;
	height: 75px;
	margin-bottom: 7px;
	border: 1px solid #aaa;
	background: #fff;
	resize: none;
}

.scroll{
	position: absolute;
	top: 23px;
	right: 2px;
	width: 10px;
	height: 71px;
	background: #f0f0f0;
}

.btn{
	width: 49px;
	height: 16px;
	border: 1px solid #bcbcbc;
	background: #e1e1e1;
}

.clear{
	margin-left: 1px;
}

.library{
	display: flex;
	flex-direction: column;
	width: 138px;
}

.box{
	flex: 1;
	margin: 4px 0;
	border: 1px solid #8a8a8a;
	background: #f4f4f4;
	font-family: "Open Sans", "Noto Sans", sans-serif;
}

.box table{
	width: 100%;
	border-collapse: collapse;
	background: #fff;
}

.box th{
	height: 16px;
	padding: 0 5px;
	background: #f0f0f0;
	font-weight: normal;
	text-align: left;
}

.box th i{
	float: right;
	margin-top: 3px;
	border: 3px solid transparent;
	border-bottom: 4px solid #555;
	border-top: 0;
}

.box td{
	height: 35px;
	padding-left: 5px;
}

.box .thumb{
	width: 64px;
	padding: 1px 0 0 1px;
}

.thumb svg{
	background: #212830;
}

.t-line{ stroke: #00a80c; }
.t-sym{ stroke: #b6b60c; }

.thumb text{
	fill: #c6c600;
	font: 8px "DejaVu Sans Condensed", "DejaVu Sans", sans-serif;
}

.thumb .big{ font-size: 14px; }
.thumb .mid{ font-size: 11px; }

.row{
	display: flex;
	justify-content: flex-end;
	gap: 5px;
}

.small{
	width: 29px;
}

.focus{
	border: 1px solid #1a7fd6;
	outline: 1px solid #8dbde6;
	outline-offset: -2px;
}

.dialog-foot{
	display: flex;
	gap: 5px;
	padding: 5px 4px 4px;
}

.ok{
	margin-left: auto;
}

/* command line */
.command{
	display: flex;
	flex: none;
	height: 42px;
	margin-top: 1px;
	background: #2b323e;
}

.grip{
	width: 16px;
}

.console{
	display: flex;
	flex-direction: column;
	flex: 1;
	border: 1px solid #8a8a8a;
	background: #c8c8c8;
	color: #222;
	font: 8px/10px "DejaVu Sans Mono", "Liberation Mono", monospace;
}

.console pre{
	flex: 1;
	padding: 5px 1px 0;
	font: inherit;
}

.prompt{
	display: flex;
	align-items: center;
	height: 15px;
	border-top: 1px solid #8a8a8a;
	background: #fff;
}

.prompt input{
	flex: 1;
	margin-left: 3px;
	font-weight: bold;
}

/* status bar */
.status{
	display: flex;
	align-items: center;
	justify-content: flex-end;
	gap: 1px;
	flex: none;
	height: 18px;
	padding-right: 2px;
}

.status button{
	display: flex;
	align-items: center;
	justify-content: center;
	width: 15px;
	height: 16px;
	background: #303846;
}

.status svg{
	width: 12px;
	height: 12px;
}

.status .model{
	width: 31px;
}

.status .drop{
	width: 11px;
}

.status .arrow{
	margin: 0;
	border-width: 3px;
	border-bottom: 0;
}

.status .on{
	background: #4f83bb;
}

.status .gap{
	margin-left: 5px;
}
```
